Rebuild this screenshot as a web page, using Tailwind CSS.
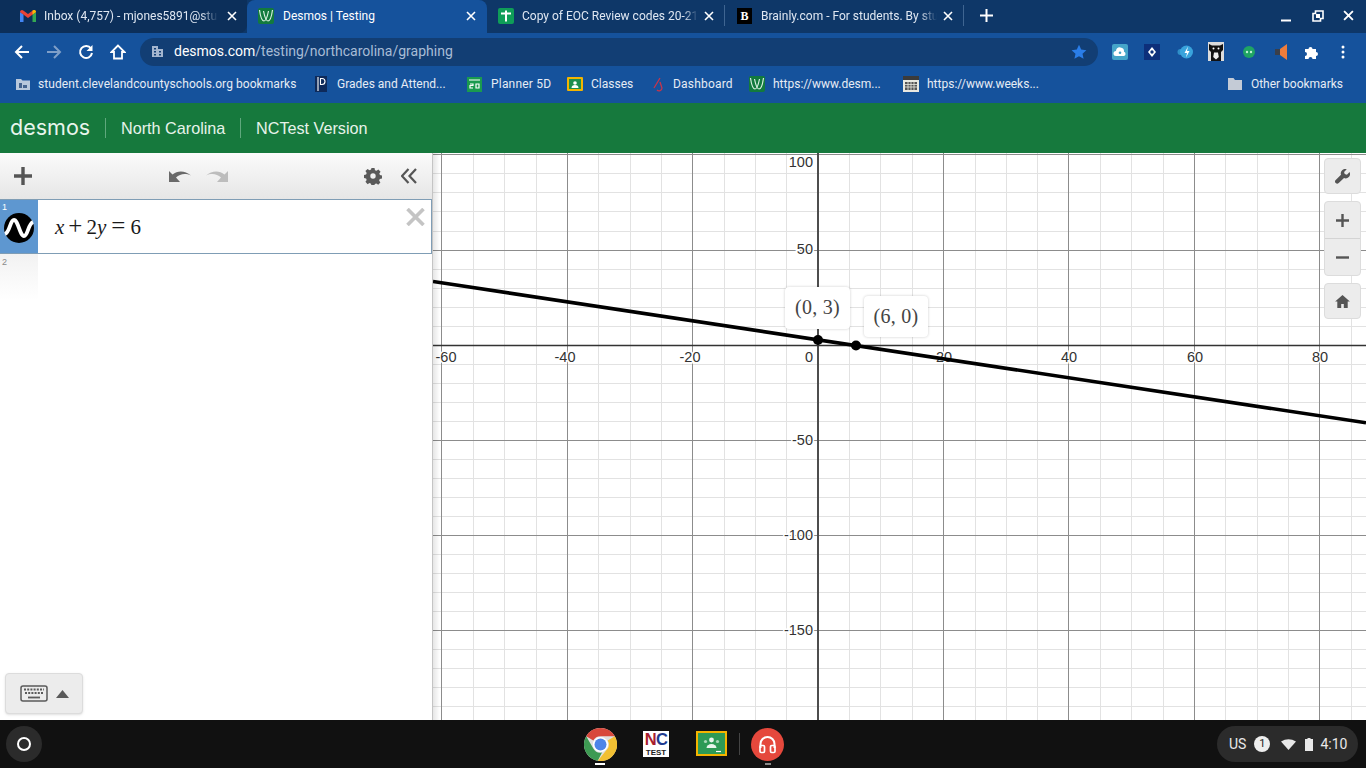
<!DOCTYPE html>
<html lang="en">
<head>
  <meta charset="UTF-8" />
  <title>Desmos | Testing</title>
  <script src="https://cdn.jsdelivr.net/npm/@tailwindcss/browser@4"></script>
</head>
<body class="w-[1366px] h-[768px] overflow-hidden flex flex-col bg-white font-['Roboto',sans-serif]">

  <!-- tab strip -->
  <div class="h-[33px] pb-[2px] bg-[#0e3768] flex text-[12px] text-[#dfe7f2] shrink-0">
    <div class="w-[247px] -mb-[2px] pb-[2px] bg-[#0c2f5a] rounded-br-lg flex items-center pl-[20px] pr-[10px]">
      <svg class="w-4 h-[13px] shrink-0" viewBox="0 0 16 13"><path d="M0 3v10h3.500V5.500z" fill="#4285f4"/><path d="M16 3v10h-3.500V5.500z" fill="#34a853"/><path d="M0 3a2 2 0 0 1 3.200-1.600L8 5l4.800-3.600A2 2 0 0 1 16 3L8 9z" fill="#ea4335"/><path d="M12.500 1.600A2 2 0 0 1 16 3l-3.500 2.600z" fill="#fbbc04"/></svg>
      <span class="ml-[8px] w-[174px] overflow-hidden whitespace-nowrap mask-r-from-90%">Inbox (4,757) - mjones5891@stu</span>
      <svg class="ml-auto w-[10px] h-[10px]" viewBox="0 0 10 10"><path d="M1 1l8 8M9 1l-8 8" stroke="#fff" stroke-width="1.600"/></svg>
    </div>
    <div class="w-[240px] -mb-[2px] pb-[2px] bg-[#15529c] rounded-t-lg flex items-center pl-[11px] pr-[11px] text-white">
      <svg class="w-4 h-4 shrink-0" viewBox="0 0 16 16"><rect width="16" height="16" rx="2" fill="#127a3d"/><path d="M1.500 2C2.500 9 3.500 13 6 13S9.500 8 10.500 3M5.500 3C6.500 8 7.500 13 10 13s3.500-4 4.500-11" fill="none" stroke="#d8f0e0" stroke-width="1.200"/></svg>
      <span class="ml-[9px]">Desmos | Testing</span>
      <svg class="ml-auto w-[10px] h-[10px]" viewBox="0 0 10 10"><path d="M1 1l8 8M9 1l-8 8" stroke="#fff" stroke-width="1.600"/></svg>
    </div>
    <div class="w-[238px] flex items-center pl-[11px] pr-[10px] border-r border-[#3f6591] my-[5px]">
      <svg class="w-4 h-4 shrink-0" viewBox="0 0 16 16"><rect width="16" height="16" rx="2" fill="#0f9d58"/><path d="M3 5.500h10M8 2.500v11" stroke="#fff" stroke-width="2"/></svg>
      <span class="ml-[8px] w-[176px] overflow-hidden whitespace-nowrap mask-r-from-92%">Copy of EOC Review codes 20-21</span>
      <svg class="ml-auto w-[10px] h-[10px]" viewBox="0 0 10 10"><path d="M1 1l8 8M9 1l-8 8" stroke="#fff" stroke-width="1.600"/></svg>
    </div>
    <div class="w-[239px] flex items-center pl-[12px] pr-[10px] border-r border-[#3f6591] my-[5px]">
      <span class="w-[15px] h-4 shrink-0 bg-black text-white font-bold text-[12px] leading-4 text-center font-['Liberation_Serif',serif]">B</span>
      <span class="ml-[9px] w-[176px] overflow-hidden whitespace-nowrap mask-r-from-90%">Brainly.com - For students. By stu</span>
      <svg class="ml-auto w-[10px] h-[10px]" viewBox="0 0 10 10"><path d="M1 1l8 8M9 1l-8 8" stroke="#fff" stroke-width="1.600"/></svg>
    </div>
    <div class="ml-[16px] flex items-center">
      <svg class="w-[13px] h-[13px]" viewBox="0 0 13 13"><path d="M6.500 0v13M0 6.500h13" stroke="#fff" stroke-width="2"/></svg>
    </div>
    <div class="ml-auto flex items-center">
      <svg class="w-[12px] h-[12px] mr-[20px]" viewBox="0 0 12 12"><path d="M1 10.500h10" stroke="#fff" stroke-width="2"/></svg>
      <svg class="w-[12px] h-[12px] mr-[19px]" viewBox="0 0 12 12"><path d="M3.500 1h7.500v7.500h-2.500v2.500h-7.500v-7.500h2.500z" fill="none" stroke="#fff" stroke-width="1.600"/><path d="M4 4h4v4h-4z" fill="#fff"/></svg>
      <svg class="w-[11px] h-[11px] mr-[12px]" viewBox="0 0 10 10"><path d="M1 1l8 8M9 1l-8 8" stroke="#fff" stroke-width="1.700"/></svg>
    </div>
  </div>

  <!-- toolbar -->
  <div class="h-[37px] bg-[#15529c] flex items-center shrink-0">
    <svg class="ml-[14px] w-4 h-4" viewBox="0 0 16 16"><path d="M15 8H2M8 2L2 8l6 6" fill="none" stroke="#fff" stroke-width="2"/></svg>
    <svg class="ml-[16px] w-4 h-4" viewBox="0 0 16 16"><path d="M1 8h13M8 2l6 6-6 6" fill="none" stroke="#7f9fc8" stroke-width="2"/></svg>
    <svg class="ml-[16px] w-4 h-4" viewBox="0 0 16 16"><path d="M13 4.500A6 6 0 1 0 14 9" fill="none" stroke="#fff" stroke-width="2"/><path d="M14.500 1v6h-6z" fill="#fff"/></svg>
    <svg class="ml-[16px] w-4 h-4" viewBox="0 0 16 16"><path d="M8 1.500L1.500 8H4v6.500h8V8h2.500z" fill="none" stroke="#fff" stroke-width="1.800"/></svg>
    <div class="ml-[14px] w-[958px] h-[28px] bg-[#123e74] rounded-full flex items-center pl-[11px] pr-[11px]">
      <svg class="w-[13px] h-[13px] shrink-0" viewBox="0 0 13 13"><path d="M1 12V1h6v3h5v8zM3 3h2v1.500H3zM3 6h2v1.500H3zM3 9h2v1.500H3zM8 6h2v1.500H8zM8 9h2v1.500H8z" fill="#a4b6cf" fill-rule="evenodd"/></svg>
      <span class="ml-[10px] text-[14px] text-white">desmos.com<span class="text-[#a8bcd6]">/testing/northcarolina/graphing</span></span>
      <svg class="ml-auto w-[16px] h-[16px]" viewBox="0 0 16 16"><path d="M8 .8l2.200 4.800 5.200.6-3.900 3.500 1.100 5.100L8 12.200 3.400 14.800l1.100-5.100L.6 6.200l5.200-.6z" fill="#2a7de8"/></svg>
    </div>
    <svg class="ml-[14px] w-4 h-4" viewBox="0 0 16 16"><rect width="16" height="16" rx="2" fill="#45a5c9"/><path d="M4 12a2.500 2.500 0 0 1 0-5 4 4 0 0 1 8 .8A2.200 2.200 0 0 1 12 12z" fill="#fff"/><circle cx="8" cy="8.800" r="1.300" fill="#45a5c9"/></svg>
    <svg class="ml-[16px] w-4 h-4" viewBox="0 0 16 16"><rect width="16" height="16" fill="#0d2f7a"/><path d="M8 3L12 8l-4 5-4-5z" fill="#fff"/><circle cx="8" cy="8" r="1.700" fill="#0d2f7a"/></svg>
    <svg class="ml-[17px] w-4 h-4" viewBox="0 0 16 16"><circle cx="3.500" cy="8" r="3" fill="#2f8fc8"/><circle cx="9.500" cy="8" r="6.500" fill="#39a3dc"/><path d="M11 2.500L7.500 9H10l-1 4.500 3.500-6.500H10z" fill="#fff"/></svg>
    <svg class="ml-[15px] w-4 h-[19px]" viewBox="0 0 16 19"><rect width="16" height="19" fill="#dcdcdc"/><path d="M1 2l3 1.500h8L15 2v6l-2 2v9H3v-9L1 8z" fill="#111"/><circle cx="5.500" cy="6.500" r="1" fill="#fff"/><circle cx="10.500" cy="6.500" r="1" fill="#fff"/><path d="M6 10.500h4l.8 4.500L8 17.500 5.200 15z" fill="#eee"/></svg>
    <svg class="ml-[19px] w-[12px] h-[12px]" viewBox="0 0 12 12"><circle cx="6" cy="6" r="6" fill="#1fa463"/><circle cx="4" cy="6" r="1.200" fill="#bff0d6"/><circle cx="8" cy="6" r="1.200" fill="#bff0d6"/></svg>
    <svg class="ml-[19px] w-[14px] h-[16px]" viewBox="0 0 14 16"><path d="M6 5l7-5v16l-7-5z" fill="#ef7d3c"/><rect x="1" y="5" width="5" height="6" fill="#3a3f4a"/></svg>
    <svg class="ml-[17px] w-[14px] h-[14px]" viewBox="0 0 14 14"><path d="M0 4h3.500a2 2 0 1 1 4 0H11v3a2 2 0 1 1 0 4v3H7.500a2 2 0 1 0-4 0H0v-3a2 2 0 1 0 0-4z" fill="#fff"/></svg>
    <svg class="ml-[22px] w-1 h-[14px]" viewBox="0 0 4 14"><circle cx="2" cy="2" r="1.500" fill="#fff"/><circle cx="2" cy="7" r="1.500" fill="#fff"/><circle cx="2" cy="12" r="1.500" fill="#fff"/></svg>
  </div>

  <!-- bookmarks bar -->
  <div class="h-[33px] pb-[5px] bg-[#15529c] flex items-center text-[12px] text-[#e6ecf5] whitespace-nowrap shrink-0">
    <svg class="ml-[16px] w-[14px] h-[12px]" viewBox="0 0 14 12"><path d="M0 1h5l1.500 1.500H14V12H0z" fill="#b8c8dc"/><path d="M3 5h3v5H3zM7 7h4v3H7z" fill="#44648f"/></svg>
    <span class="ml-[8px] w-[259px] tracking-[0.07px]">student.clevelandcountyschools.org bookmarks</span>
    <svg class="ml-[18px] w-[12px] h-[16px]" viewBox="0 0 12 16"><rect width="12" height="16" fill="#0e2a5a"/><path d="M3 1v14M5.500 2.500H7a3 3 0 0 1 0 6H5.500z" fill="none" stroke="#fff" stroke-width="1.100"/></svg>
    <span class="ml-[10px] w-[109px]">Grades and Attend...</span>
    <svg class="ml-[21px] w-[15px] h-[15px]" viewBox="0 0 15 15"><rect width="15" height="15" fill="#1a9a4f"/><path d="M2 3h11M3 7h3v1.500H3V11h3M9 7h3v4H9z" fill="none" stroke="#fff" stroke-width="1.200"/></svg>
    <span class="ml-[9px] w-[60px] tracking-[0.2px]">Planner 5D</span>
    <svg class="ml-[16px] w-4 h-[14px]" viewBox="0 0 16 14"><rect width="16" height="14" rx="1" fill="#f4b400"/><rect x="2" y="2" width="12" height="10" fill="#1f8e4e"/><circle cx="8" cy="6" r="1.800" fill="#fff"/><path d="M4.500 11a3.500 3 0 0 1 7 0z" fill="#fff"/></svg>
    <span class="ml-[8px] w-[42px]">Classes</span>
    <svg class="ml-[19px] w-[14px] h-[15px]" viewBox="0 0 14 15"><path d="M8 1L2 11M8 5l2 6a3 3 0 0 1-5 2" fill="none" stroke="#c8344a" stroke-width="1.300"/></svg>
    <span class="ml-[7px] w-[60px] tracking-[0.2px]">Dashboard</span>
    <svg class="ml-[16px] w-4 h-4" viewBox="0 0 16 16"><rect width="16" height="16" rx="2" fill="#127a3d"/><path d="M1.500 2C2.500 9 3.500 13 6 13S9.500 8 10.500 3M5.500 3C6.500 8 7.500 13 10 13s3.500-4 4.500-11" fill="none" stroke="#d8f0e0" stroke-width="1.200"/></svg>
    <span class="ml-[8px] w-[108px]">https://www.desm...</span>
    <svg class="ml-[22px] w-4 h-4" viewBox="0 0 16 16"><rect width="16" height="16" fill="#e8e8e0"/><rect y="0" width="16" height="4" fill="#3b3b3b"/><path d="M2 6h12v8H2z" fill="#555"/><path d="M2 8.500h12M2 11h12M5 6v8M8 6v8M11 6v8" stroke="#e8e8e0" stroke-width=".8"/></svg>
    <span class="ml-[8px] w-[111px]">https://www.weeks...</span>
    <svg class="ml-auto w-[14px] h-[12px]" viewBox="0 0 14 12"><path d="M0 0h5.500L7 2h7v10H0z" fill="#c4cbd6"/></svg>
    <span class="ml-[9px] mr-[23px]">Other bookmarks</span>
  </div>

  <!-- desmos header -->
  <div class="h-[50px] bg-[#16793d] flex items-center text-[#e6f3ea] shrink-0 font-['Liberation_Sans',sans-serif]">
    <span class="ml-[10px] w-[80px] text-[21.500px] leading-none font-['Inter',sans-serif] text-[#e8f5ec]">desmos</span>
    <span class="ml-[15px] h-[20px] w-px bg-[#5fa87d]"></span>
    <span class="ml-[15px] w-[104px] text-[16.200px] whitespace-nowrap">North Carolina</span>
    <span class="ml-[15px] h-[20px] w-px bg-[#5fa87d]"></span>
    <span class="ml-[15px] text-[16.200px]">NCTest Version</span>
  </div>

  <!-- calculator -->
  <div class="flex-1 flex min-h-0">
    <div class="w-[433px] shrink-0 relative flex flex-col border-r border-[#c4c4c4] bg-white z-10">
      <div class="h-[46px] shrink-0 bg-gradient-to-b from-[#fbfbfb] to-[#e6e6e6] flex items-center">
        <svg class="ml-[14px] w-[18px] h-[18px]" viewBox="0 0 18 18"><path d="M9 0v18M0 9h18" stroke="#555" stroke-width="3.400"/></svg>
        <svg class="ml-[137px] w-[22px] h-[15px]" viewBox="0 0 22 15"><path d="M0 13V2l3.500 3.500C9 1 16 1.500 22 6.500 16 4 11 5 7 8.500L11 13z" fill="#6a6a6a"/></svg>
        <svg class="ml-[15px] w-[22px] h-[15px]" viewBox="0 0 22 15"><path d="M22 13V2l-3.500 3.500C13 1 6 1.500 0 6.500 6 4 11 5 15 8.500L11 13z" fill="#bdbdbd"/></svg>
        <svg class="ml-[136px] w-[18px] h-[18px]" viewBox="0 0 18 18"><path d="M7.300 0h3.400l.5 2.500 1.700.7 2.100-1.400 2.400 2.400-1.400 2.100.7 1.700 2.300.5v3.400l-2.500.5-.7 1.700 1.400 2.100-2.400 2.400-2.100-1.400-1.700.7-.5 2.100H7.300l-.5-2.500-1.700-.7-2.100 1.400L.6 15.500 2 13.400l-.7-1.700L-1 11.200V7.800l2.300-.5.7-1.700L.6 3.500 3 1.100l2.100 1.400 1.700-.7zM9 6a3 3 0 1 0 0 6 3 3 0 0 0 0-6z" fill="#5a5a5a" fill-rule="evenodd" transform="translate(.9 .9) scale(.9)"/></svg>
        <svg class="ml-[19px] w-[16px] h-[16px]" viewBox="0 0 16 16"><path d="M7.500 1L1 8l6.500 7M15 1L8.500 8l6.500 7" fill="none" stroke="#555" stroke-width="2.200"/></svg>
      </div>

      <div class="h-[55px] shrink-0 flex border border-l-0 border-[#7f9db5]">
        <div class="w-[38px] bg-[#5e97d0] relative flex items-center justify-center">
          <span class="absolute left-[2px] top-[2px] text-[9px] leading-[11px] text-white font-['Liberation_Sans',sans-serif]">1</span>
          <svg class="w-[30px] h-[30px] mt-[3px]" viewBox="0 0 30 30"><circle cx="15" cy="15" r="15" fill="#000"/><path d="M1 21c5-2 5-14 9-14s6 16 10 16 4-12 9-14" fill="none" stroke="#fff" stroke-width="3.800"/></svg>
        </div>
        <div class="flex-1 relative flex items-center pl-[17px] font-['Liberation_Serif',serif] text-[21px] leading-[24px] text-[#1a1a1a]">
          <span><i>x</i><span class="mx-[4px] text-[25px] leading-[24px]">+</span>2<i>y</i><span class="mx-[5px] text-[25px] leading-[24px]">=</span>6</span>
          <svg class="absolute right-[6px] top-[8px] w-[19px] h-[18px]" viewBox="0 0 19 18"><path d="M1.500 1l16 16M17.500 1l-16 16" stroke="#c4c4c4" stroke-width="3.600"/></svg>
        </div>
      </div>

      <div class="h-[46px] shrink-0 flex">
        <div class="w-[38px] bg-gradient-to-b from-[#f2f2f2] to-white relative">
          <span class="absolute left-[2px] top-[3px] text-[9px] leading-[11px] text-[#8a8a8a] font-['Liberation_Sans',sans-serif]">2</span>
        </div>
      </div>

      <div class="absolute left-[5px] bottom-[6px] w-[78px] h-[41px] rounded bg-[#ececec] border border-[#dcdcdc] shadow-sm flex items-center justify-center gap-[8px]">
        <svg class="w-[28px] h-[17px]" viewBox="0 0 28 17"><rect x="1" y="1" width="26" height="15" rx="2" fill="none" stroke="#5a5a5a" stroke-width="1.500"/><path d="M4 4.500h20M5 8h18" stroke="#5a5a5a" stroke-width="1.800" stroke-dasharray="2 1.200"/><path d="M8 12.500h12" stroke="#5a5a5a" stroke-width="1.800"/></svg>
        <svg class="w-[13px] h-[8px]" viewBox="0 0 13 8"><path d="M6.500 0L13 8H0z" fill="#5a5a5a"/></svg>
      </div>
    </div>

    <!-- graph paper -->
    <div class="flex-1 relative overflow-hidden bg-white font-['Liberation_Sans',sans-serif]">
      <svg class="absolute inset-0 w-[933px] h-[567px]" viewBox="433 153 933 567">
        <path d="M473.500 153V720M504.500 153V720M536.500 153V720M598.500 153V720M630.500 153V720M661.500 153V720M724.500 153V720M755.500 153V720M786.500 153V720M849.500 153V720M880.500 153V720M912.500 153V720M975.500 153V720M1006.500 153V720M1037.500 153V720M1100.500 153V720M1131.500 153V720M1163.500 153V720M1225.500 153V720M1257.500 153V720M1288.500 153V720M1351.500 153V720
                 M433 173.500H1366M433 192.500H1366M433 211.500H1366M433 231.500H1366M433 269.500H1366M433 288.500H1366M433 307.500H1366M433 326.500H1366M433 364.500H1366M433 383.500H1366M433 402.500H1366M433 421.500H1366M433 459.500H1366M433 478.500H1366M433 497.500H1366M433 516.500H1366M433 554.500H1366M433 573.500H1366M433 592.500H1366M433 611.500H1366M433 649.500H1366M433 668.500H1366M433 687.500H1366M433 706.500H1366"
              stroke="#e2e2e2" stroke-width="1" fill="none"/>
        <path d="M441.500 153V720M567.500 153V720M692.500 153V720M943.500 153V720M1068.500 153V720M1194.500 153V720M1319.500 153V720M433 154.500H1366M433 250.500H1366M433 440.500H1366M433 535.500H1366M433 630.500H1366"
              stroke="#8c8c8c" stroke-width="1" fill="none"/>
        <path d="M818 153V720" stroke="#4d4d4d" stroke-width="2"/>
        <path d="M433 345.500H1366" stroke="#333" stroke-width="1.400"/>
        <g fill="#333" font-size="14.500" text-anchor="middle" stroke="#fff" stroke-width="3" paint-order="stroke">
          <text x="446" y="362">-60</text>
          <text x="565" y="362">-40</text>
          <text x="690" y="362">-20</text>
          <text x="809" y="362">0</text>
          <text x="944" y="362">20</text>
          <text x="1069" y="362">40</text>
          <text x="1195" y="362">60</text>
          <text x="1320" y="362">80</text>
        </g>
        <g fill="#333" font-size="14.500" text-anchor="end" stroke="#fff" stroke-width="3" paint-order="stroke">
          <text x="813" y="167">100</text>
          <text x="813" y="254">50</text>
          <text x="813" y="445">-50</text>
          <text x="813" y="540">-100</text>
          <text x="813" y="635">-150</text>
        </g>
        <path d="M433 281.500L1366 422.800" stroke="#000" stroke-width="3.600"/>
        <circle cx="818" cy="340" r="5" fill="#000"/>
        <circle cx="856" cy="345.500" r="5" fill="#000"/>
      </svg>

      <div class="absolute left-0 top-0 bottom-0 w-[7px] bg-gradient-to-r from-black/10 to-transparent"></div>

      <!-- point labels -->
      <div class="absolute left-[352px] top-[134px] w-[65px] h-[42px] pb-[3px] bg-white rounded shadow-[0_0_3px_rgba(0,0,0,0.2)] flex items-center justify-center font-['Liberation_Serif',serif] text-[20px] tracking-[0.3px] text-[#444]">(0, 3)</div>
      <div class="absolute left-[431px] top-[143px] w-[64px] h-[41px] pb-[2px] bg-white rounded shadow-[0_0_3px_rgba(0,0,0,0.2)] flex items-center justify-center font-['Liberation_Serif',serif] text-[20px] tracking-[0.3px] text-[#444]">(6, 0)</div>

      <!-- graph tools -->
      <div class="absolute right-[5px] top-[5px] w-[37px] flex flex-col gap-[7px]">
        <div class="h-[36px] rounded bg-[#ececec] border border-[#dcdcdc] flex items-center justify-center">
          <svg class="w-[15px] h-[15px]" viewBox="0 0 17 17"><path d="M16.500 3.500l-3 3-2.500-.7-.7-2.500 3-3a5 5 0 0 0-6.500 6.300L.8 12.600a2.300 2.300 0 0 0 3.400 3.400l6-5.700a5 5 0 0 0 6.300-6.800z" fill="#555"/></svg>
        </div>
        <div class="h-[75px] rounded bg-[#ececec] border border-[#dcdcdc] flex flex-col">
          <div class="flex-1 flex items-center justify-center border-b border-[#d4d4d4]">
            <svg class="w-[13px] h-[13px]" viewBox="0 0 13 13"><path d="M6.500 0v13M0 6.500h13" stroke="#555" stroke-width="2.400"/></svg>
          </div>
          <div class="flex-1 flex items-center justify-center">
            <svg class="w-[13px] h-[13px]" viewBox="0 0 13 13"><path d="M0 6.500h13" stroke="#555" stroke-width="2.400"/></svg>
          </div>
        </div>
        <div class="h-[36px] rounded bg-[#ececec] border border-[#dcdcdc] flex items-center justify-center">
          <svg class="w-[15px] h-[13px]" viewBox="0 0 17 15"><path d="M8.500 0L17 7.500h-2.500V15H10v-4.500H7V15H2.500V7.500H0z" fill="#555"/></svg>
        </div>
      </div>
    </div>
  </div>

  <!-- chrome os shelf -->
  <div class="h-[48px] bg-[#111111] relative flex items-center shrink-0">
    <div class="ml-[6px] w-9 h-9 rounded-full bg-[#2b2b2b] flex items-center justify-center">
      <span class="w-[14px] h-[14px] rounded-full border-2 border-white"></span>
    </div>
    <svg class="absolute left-[584px] top-[8px] w-[33px] h-[33px]" viewBox="0 0 33 33">
      <circle cx="16.500" cy="16.500" r="16.500" fill="#e0e0e0"/>
      <path d="M16.500 0A16.500 16.500 0 0 1 30.800 8.250H16.500A8.250 8.250 0 0 0 9.300 12.500L2.200 8.250A16.500 16.500 0 0 1 16.500 0z" fill="#d8483c"/>
      <path d="M2.200 8.250L9.300 20.600A8.250 8.250 0 0 0 18 24.600L13.800 32.800A16.500 16.500 0 0 1 2.200 8.250z" fill="#3d9a52"/>
      <path d="M30.800 8.250A16.500 16.500 0 0 1 13.800 32.800L23.700 20.600A8.250 8.250 0 0 0 23.700 12.400z" fill="#f2c033"/>
      <circle cx="16.500" cy="16.500" r="7.600" fill="#fff"/>
      <circle cx="16.500" cy="16.500" r="6" fill="#4c84e8"/>
    </svg>
    <span class="absolute left-[595px] top-[43px] w-[10px] h-[2px] bg-white"></span>
    <div class="absolute left-[643px] top-[11px] w-[26px] h-[26px] bg-white flex flex-col items-center font-['Liberation_Sans',sans-serif]">
      <span class="text-[16.500px] leading-[17px] font-bold text-[#a81e2e] tracking-[-0.6px]">N<span class="text-[#1d3a8f]">C</span></span>
      <span class="text-[8px] leading-[9px] font-bold text-[#222]">TEST</span>
    </div>
    <div class="absolute left-[696px] top-[11px] w-[31px] h-[25px] bg-[#f4b400] p-[2px]">
      <svg class="w-full h-full block" viewBox="0 0 27 21"><rect width="27" height="21" fill="#2d9a55"/><circle cx="13.500" cy="7" r="2.400" fill="#e8f5ec"/><circle cx="7.500" cy="8.500" r="1.600" fill="#a8d8b8"/><circle cx="19.500" cy="8.500" r="1.600" fill="#a8d8b8"/><path d="M8.500 15a5 4 0 0 1 10 0z" fill="#e8f5ec"/><path d="M18 18.500h5" stroke="#fff" stroke-width="1.200"/></svg>
    </div>
    <span class="absolute left-[739px] top-[13px] w-px h-[22px] bg-[#444]"></span>
    <svg class="absolute left-[751px] top-[8px] w-[33px] h-[33px]" viewBox="0 0 33 33">
      <circle cx="16.500" cy="16.500" r="16.500" fill="#e5483c"/>
      <path d="M9.500 20v-4a7 7 0 0 1 14 0v4" fill="none" stroke="#fff" stroke-width="2"/>
      <rect x="9" y="17.500" width="4.500" height="7" rx="1.200" fill="none" stroke="#fff" stroke-width="1.700"/>
      <rect x="19.500" y="17.500" width="4.500" height="7" rx="1.200" fill="none" stroke="#fff" stroke-width="1.700"/>
    </svg>
    <span class="absolute left-[765px] top-[43px] w-[6px] h-[2px] bg-[#8a8a8a]"></span>

    <div class="absolute left-[1217px] top-[6px] w-[141px] h-[36px] rounded-full bg-[#2b2b2b] flex items-center text-white/90 text-[14px]">
      <span class="ml-[12px]">US</span>
      <span class="ml-[8px] w-4 h-4 rounded-full bg-[#eeeeee] text-[#222] text-[11px] leading-4 text-center">1</span>
      <svg class="ml-[11px] w-[15px] h-[11px]" viewBox="0 0 15 11"><path d="M0 2.500Q7.500-2 15 2.500L7.500 11z" fill="#e8e8e8"/></svg>
      <svg class="ml-[9px] w-[8px] h-[13px]" viewBox="0 0 8 13"><path d="M2.500 0h3v1H8v12H0V1h2.500z" fill="#e8e8e8"/></svg>
      <span class="ml-[7px]">4:10</span>
    </div>
  </div>
</body>
</html>
